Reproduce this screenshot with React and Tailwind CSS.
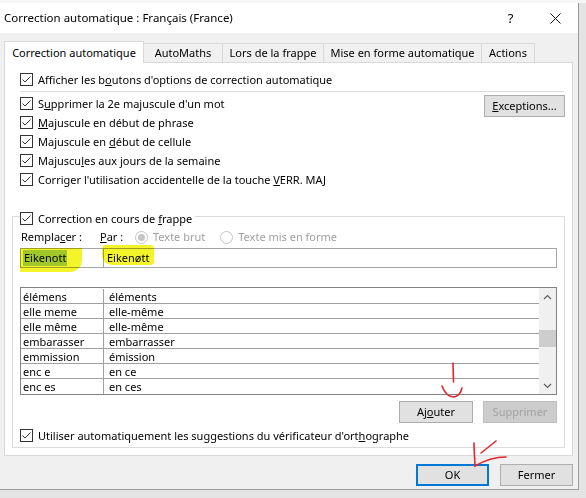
import React from "react";

const tabs = [
  { label: "Correction automatique", w: "w-[140px]", active: true },
  { label: "AutoMaths", w: "w-[79px]" },
  { label: "Lors de la frappe", w: "w-[101px]" },
  { label: "Mise en forme automatique", w: "w-[158px]" },
  { label: "Actions", w: "w-[53px]" },
];

const entries = [
  ["élémens", "éléments"],
  ["elle meme", "elle-même"],
  ["elle même", "elle-même"],
  ["embarasser", "embarrasser"],
  ["emmission", "émission"],
  ["enc e", "en ce"],
  ["enc es", "en ces"],
];

const Check = () => (
  <svg width="13" height="13" viewBox="0 0 13 13" className="shrink-0">
    <rect x="0.5" y="0.5" width="12" height="12" fill="#fff" stroke="#333" />
    <path d="M2.5 6.5 L5 9 L10.5 3.5" fill="none" stroke="#333" strokeWidth="1" />
  </svg>
);

const Radio = ({ on }) => (
  <svg width="13" height="13" viewBox="0 0 13 13" className="shrink-0">
    <circle cx="6.5" cy="6.5" r="6" fill="#fff" stroke="#c4c4c4" />
    {on && <circle cx="6.5" cy="6.5" r="3.5" fill="#c4c4c4" />}
  </svg>
);

const Chevron = ({ down }) => (
  <svg width="9" height="6" viewBox="0 0 9 6">
    <path
      d={down ? "M1 1 L4.5 4.5 L8 1" : "M1 5 L4.5 1.5 L8 5"}
      fill="none"
      stroke="#606060"
      strokeWidth="1.2"
    />
  </svg>
);

const CheckRow = ({ children }) => (
  <div className="flex h-[19px] items-center gap-[5px]">
    <Check />
    <span className="whitespace-nowrap">{children}</span>
  </div>
);

const Button = ({ children, className = "" }) => (
  <div
    className={`flex h-[22px] items-center justify-center border border-[#adadad] bg-[#e1e1e1] ${className}`}
  >
    {children}
  </div>
);

export default function App() {
  return (
    <div className="relative h-[498px] w-[586px] overflow-hidden bg-[#e4e4e4] font-['Noto_Sans','Liberation_Sans',sans-serif] text-[11px] leading-[14px] text-black">
      <div className="h-[3px] bg-[#f6f6f6]" />

      <div className="flex w-[579px] flex-col border-r border-b border-[#9c9c9c] bg-[#f0f0f0] pb-[3px]">
        {/* title bar */}
        <div className="flex h-[30px] items-center bg-white">
          <span className="pl-[4px] text-[11.5px]">Correction automatique : Français (France)</span>
          <div className="ml-auto flex h-full">
            <div className="flex w-[45px] items-center justify-center text-[13px]">?</div>
            <div className="flex w-[45px] items-center justify-center">
              <svg width="11" height="11" viewBox="0 0 11 11">
                <path d="M0.5 0.5 L10.5 10.5 M10.5 0.5 L0.5 10.5" stroke="#111" strokeWidth="1" />
              </svg>
            </div>
          </div>
        </div>

        <div className="px-[4px] pt-[8px]">
          {/* tabs */}
          <div className="flex h-[21px] items-end">
            {tabs.map((t) =>
              t.active ? (
                <div
                  key={t.label}
                  className={`relative z-10 -mb-px flex h-[22px] items-center justify-center whitespace-nowrap border border-b-0 border-[#d9d9d9] bg-white ${t.w}`}
                >
                  {t.label}
                </div>
              ) : (
                <div
                  key={t.label}
                  className={`flex h-[19px] items-center justify-center whitespace-nowrap border border-l-0 border-b-0 border-[#d9d9d9] bg-[#f0f0f0] ${t.w}`}
                >
                  {t.label}
                </div>
              )
            )}
          </div>

          {/* panel */}
          <div className="w-[569px] border border-[#d9d9d9] bg-white px-[7px] pt-[7px]">
            <div className="pl-[8px]">
              <CheckRow>
                Afficher les b<u>o</u>utons d'options de correction automatique
              </CheckRow>
            </div>
            <div className="mt-[2px] ml-[8px] mr-[1px] h-px bg-[#dcdcdc]" />

            <div className="mt-[2px] flex items-start justify-between pl-[8px]">
              <div className="flex flex-col">
                <CheckRow>
                  S<u>u</u>pprimer la 2e majuscule d'un mot
                </CheckRow>
                <CheckRow>
                  <u>M</u>ajuscule en début de phrase
                </CheckRow>
                <CheckRow>
                  Majuscule en <u>d</u>ébut de cellule
                </CheckRow>
                <CheckRow>
                  Majuscu<u>l</u>es aux jours de la semaine
                </CheckRow>
                <CheckRow>
                  Corriger l'utilisation accidentelle de la touche <u>V</u>ERR. MAJ
                </CheckRow>
              </div>
              <Button className="mt-[1px] w-[81px]">
                <span>
                  <u>E</u>xceptions...
                </span>
              </Button>
            </div>

            {/* group box */}
            <div className="mt-[27px] mb-[7px] border border-[#dcdcdc] px-[7px] pb-[2px]">
              <div className="-mt-[6px] flex h-[15px] w-fit items-center gap-[5px] bg-white pr-[3px]">
                <Check />
                <span>
                  Correction en cours de <u>f</u>rappe
                </span>
              </div>

              <div className="mt-[2px] flex h-[18px] items-center">
                <span className="w-[80px] pl-[1px]">
                  Rempla<u>c</u>er :
                </span>
                <span className="w-[35px]">
                  <u>P</u>ar :
                </span>
                <Radio on />
                <span className="ml-[5px] text-[#a0a0a0]">Texte brut</span>
                <span className="ml-[15px] flex">
                  <Radio />
                </span>
                <span className="ml-[5px] text-[#a0a0a0]">Texte mis en forme</span>
              </div>

              <div className="relative mt-[2px] flex h-[20px] w-[537px] border border-[#a5a5a5]">
                <div className="flex w-[83px] items-center border-r border-[#a5a5a5] pl-[2px]">
                  <span className="bg-[#a8d1f5] px-px py-[1px]">Eikenott</span>
                </div>
                <div className="flex items-center pl-[3px]">Eikenøtt</div>
                <div className="pointer-events-none absolute -left-px -top-px h-[24px] w-[62px] rounded-tl-[3px] rounded-br-[12px] bg-[#f4f42a] mix-blend-multiply" />
                <div className="pointer-events-none absolute left-[81px] -top-[4px] h-[20px] w-[52px] rounded-[4px] rounded-bl-[10px] bg-[#f4f42a] mix-blend-multiply" />
              </div>

              {/* list */}
              <div className="mt-[19px] flex h-[108px] w-[537px] border border-[#828282]">
                <div className="flex-1 pt-px">
                  {entries.map(([a, b], i) => (
                    <div
                      key={i}
                      className={`flex h-[15px] leading-[13px] ${i < entries.length - 1 ? "border-b border-[#a0a0a0]" : ""}`}
                    >
                      <div className="flex w-[83px] items-center border-r border-[#a0a0a0] pl-[2px]">{a}</div>
                      <div className="flex items-center pl-[5px]">{b}</div>
                    </div>
                  ))}
                </div>
                <div className="flex w-[17px] flex-col bg-[#f0f0f0]">
                  <div className="flex h-[17px] items-center justify-center">
                    <Chevron />
                  </div>
                  <div className="flex-1">
                    <div className="mt-[25px] h-[17px] bg-[#cdcdcd]" />
                  </div>
                  <div className="flex h-[17px] items-center justify-center">
                    <Chevron down />
                  </div>
                </div>
              </div>

              <div className="mt-[6px] flex w-[537px] justify-end gap-[10px]">
                <Button className="w-[74px]">
                  <span>
                    Aj<u>o</u>uter
                  </span>
                </Button>
                <div className="flex h-[22px] w-[74px] items-center justify-center border border-[#bfbfbf] bg-[#cccccc] text-[#a3a3a3]">
                  Supprimer
                </div>
              </div>

              <div className="mt-[3px]">
                <CheckRow>
                  Utiliser automatiquement les suggestions du vérificateur d'ort<u>h</u>ographe
                </CheckRow>
              </div>
            </div>
          </div>

          {/* footer buttons */}
          <div className="mt-[8px] flex w-[569px] justify-end gap-[11px]">
            <div className="flex h-[22px] w-[73px] items-center justify-center border-2 border-[#0078d7] bg-[#e1e1e1]">
              OK
            </div>
            <Button className="w-[73px]">Fermer</Button>
          </div>
        </div>
      </div>

      {/* red annotations */}
      <svg
        className="pointer-events-none absolute left-0 top-0"
        width="586"
        height="498"
        viewBox="0 0 586 498"
      >
        <g fill="none" stroke="#e3262c" strokeWidth="1.6" strokeLinecap="round">
          <path d="M453 363 L453.5 382" />
          <path d="M442 386 Q446 397 454 397 Q460 396 462 388" />
          <path d="M474 443 C474 452 475 460 475 466 C485 460 495 457 506 457" />
          <path d="M481 453 L496 441" />
        </g>
      </svg>
    </div>
  );
}
